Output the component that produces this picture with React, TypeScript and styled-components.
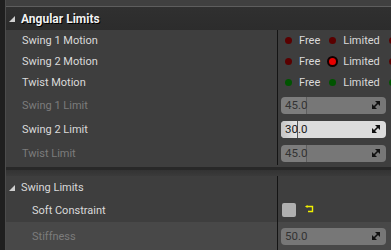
import React from "react";
import styled, { createGlobalStyle } from "styled-components";

const GlobalStyle = createGlobalStyle`
  html, body {
    margin: 0;
    padding: 0;
    background: #3e3e3e;
    overflow: hidden;
  }
  body {
    font-family: Roboto, "Liberation Sans", sans-serif;
  }
`;

const Panel = styled.div`
  display: flex;
  width: 391px;
  height: 250px;
  overflow: hidden;
`;

const Gutter = styled.div`
  width: 5px;
  flex: none;
  background: #1f1f1f;
  border-right: 1px solid #4c4c4c;
`;

const Content = styled.div`
  flex: 1;
  min-width: 0;
  display: flex;
  flex-direction: column;
  background: #3e3e3e;
`;

const TopStub = styled.div`
  height: 6px;
  background: #404040;
  border-bottom: 1px solid #5e5e5e;
`;

const CategoryHeader = styled.div`
  height: 23px;
  display: flex;
  align-items: center;
  gap: 6px;
  padding-left: 3px;
  background: linear-gradient(#303030, #2c2c2c);
  color: #f2f2f2;
  font-size: 12px;
  font-weight: bold;
  text-shadow: 1px 1px 0 #000;
`;

const Triangle = styled.span`
  width: 0;
  height: 0;
  border-left: 6px solid transparent;
  border-bottom: 6px solid #cfcfcf;
  margin-top: 1px;
`;

const Row = styled.div<{ $h: number; $hover?: boolean }>`
  display: grid;
  grid-template-columns: 271px 1px 1fr;
  height: ${(p) => p.$h}px;
  background: ${(p) => (p.$hover ? "#484848" : "#3e3e3e")};
`;

const NameCell = styled.div<{ $indent: number; $dim?: boolean }>`
  display: flex;
  align-items: center;
  gap: 6px;
  padding-left: ${(p) => p.$indent}px;
  font-size: 11px;
  color: ${(p) => (p.$dim ? "#7c7c7c" : "#dadada")};
  white-space: nowrap;
`;

const Divider = styled.div`
  background: #141414;
`;

const ValueCell = styled.div`
  display: flex;
  align-items: center;
  padding-left: 3px;
  min-width: 0;
  overflow: hidden;
  white-space: nowrap;
`;

const RadioGroup = styled.div`
  display: flex;
  align-items: center;
  padding-left: 2px;
`;

const Option = styled.div`
  display: flex;
  align-items: center;
  gap: 5px;
  margin-right: 7px;
  font-size: 11px;
  color: #dadada;
`;

const DotSlot = styled.span`
  width: 11px;
  height: 11px;
  display: flex;
  align-items: center;
  justify-content: center;
`;

const Dot = styled.span<{ $color: string; $on?: boolean }>`
  box-sizing: border-box;
  width: ${(p) => (p.$on ? 11 : 7)}px;
  height: ${(p) => (p.$on ? 11 : 7)}px;
  border-radius: 50%;
  background: ${(p) => p.$color};
  border: ${(p) => (p.$on ? "2px solid #120000" : "none")};
`;

const SpinBox = styled.div<{ $active?: boolean }>`
  position: relative;
  box-sizing: border-box;
  width: 105px;
  height: 17px;
  display: flex;
  align-items: center;
  justify-content: space-between;
  padding: 0 6px 0 4px;
  border-radius: 4px;
  overflow: hidden;
  background: ${(p) => (p.$active ? "#dcdcdc" : "#777777")};
  color: ${(p) => (p.$active ? "#1a1a1a" : "#333333")};
  font-size: 11.5px;
`;

const Fill = styled.span<{ $active?: boolean }>`
  position: absolute;
  left: 0;
  top: 0;
  bottom: 0;
  border-right: 1px solid ${(p) => (p.$active ? "#5a5a5a" : "#5e5e5e")};
  background: ${(p) =>
    p.$active
      ? "linear-gradient(90deg, #c4c4c4, #e6e6e6)"
      : "rgba(255, 255, 255, 0.05)"};
`;

const SpinText = styled.span`
  position: relative;
`;

const Separator = styled.div`
  height: 11px;
  background: linear-gradient(
    #3e3e3e 0 2px,
    #282828 2px 5px,
    #333333 5px,
    #3a3a3a 11px
  );
`;

const CheckBox = styled.span`
  width: 14px;
  height: 14px;
  margin-left: 1px;
  border-radius: 2px;
  background: #b0b0b0;
`;

const ResetIcon = styled.svg`
  margin-left: 9px;
  margin-top: -3px;
`;

function SpinIcon() {
  return (
    <svg width="8" height="8" viewBox="0 0 8 8" style={{ position: "relative" }}>
      <polygon points="3,0 8,0 8,5" fill="#111" />
      <polygon points="0,3 0,8 5,8" fill="#111" />
      <line x1="1" y1="7" x2="7" y2="1" stroke="#111" strokeWidth="1.6" />
    </svg>
  );
}

type SpinProps = { value: string; fill?: number; active?: boolean };

function Spin({ value, fill, active }: SpinProps) {
  return (
    <SpinBox $active={active}>
      {fill !== undefined && <Fill $active={active} style={{ width: fill }} />}
      <SpinText>{value}</SpinText>
      <SpinIcon />
    </SpinBox>
  );
}

type MotionProps = { color: string; selected: number };

// third option's label lies past the panel edge, only its dot shows
function Motion({ color, selected }: MotionProps) {
  const labels = ["Free", "Limited", ""];
  return (
    <RadioGroup>
      {labels.map((label, i) => (
        <Option key={i}>
          <DotSlot>
            <Dot $color={i === selected ? "#e80000" : color} $on={i === selected} />
          </DotSlot>
          {label}
        </Option>
      ))}
    </RadioGroup>
  );
}

export default function App() {
  return (
    <>
      <GlobalStyle />
      <Panel>
        <Gutter />
        <Content>
          <TopStub />
          <CategoryHeader>
            <Triangle />
            Angular Limits
          </CategoryHeader>
          <Row $h={21}>
            <NameCell $indent={16}>Swing 1 Motion</NameCell>
            <Divider />
            <ValueCell>
              <Motion color="#5a0000" selected={-1} />
            </ValueCell>
          </Row>
          <Row $h={21}>
            <NameCell $indent={16}>Swing 2 Motion</NameCell>
            <Divider />
            <ValueCell>
              <Motion color="#5a0000" selected={1} />
            </ValueCell>
          </Row>
          <Row $h={21}>
            <NameCell $indent={16}>Twist Motion</NameCell>
            <Divider />
            <ValueCell>
              <Motion color="#005400" selected={-1} />
            </ValueCell>
          </Row>
          <Row $h={24}>
            <NameCell $indent={16} $dim>
              Swing 1 Limit
            </NameCell>
            <Divider />
            <ValueCell>
              <Spin value="45.0" fill={25} />
            </ValueCell>
          </Row>
          <Row $h={24}>
            <NameCell $indent={16}>Swing 2 Limit</NameCell>
            <Divider />
            <ValueCell>
              <Spin value="30.0" fill={16} active />
            </ValueCell>
          </Row>
          <Row $h={24}>
            <NameCell $indent={16} $dim>
              Twist Limit
            </NameCell>
            <Divider />
            <ValueCell>
              <Spin value="45.0" fill={25} />
            </ValueCell>
          </Row>
          <Separator />
          <Row $h={22}>
            <NameCell $indent={3}>
              <Triangle />
              Swing Limits
            </NameCell>
            <Divider />
            <ValueCell />
          </Row>
          <Row $h={24}>
            <NameCell $indent={26}>Soft Constraint</NameCell>
            <Divider />
            <ValueCell>
              <CheckBox />
              <ResetIcon width="9" height="8" viewBox="0 0 9 8">
                <path
                  d="M2 1.5 H7.5 V6.5 H3"
                  fill="none"
                  stroke="#f0f000"
                  strokeWidth="1.4"
                />
                <polygon points="0,1.5 2.5,0 2.5,3" fill="#f0f000" />
              </ResetIcon>
            </ValueCell>
          </Row>
          <Row $h={28} $hover>
            <NameCell $indent={26} $dim>
              Stiffness
            </NameCell>
            <Divider />
            <ValueCell>
              <Spin value="50.0" />
            </ValueCell>
          </Row>
        </Content>
      </Panel>
    </>
  );
}
